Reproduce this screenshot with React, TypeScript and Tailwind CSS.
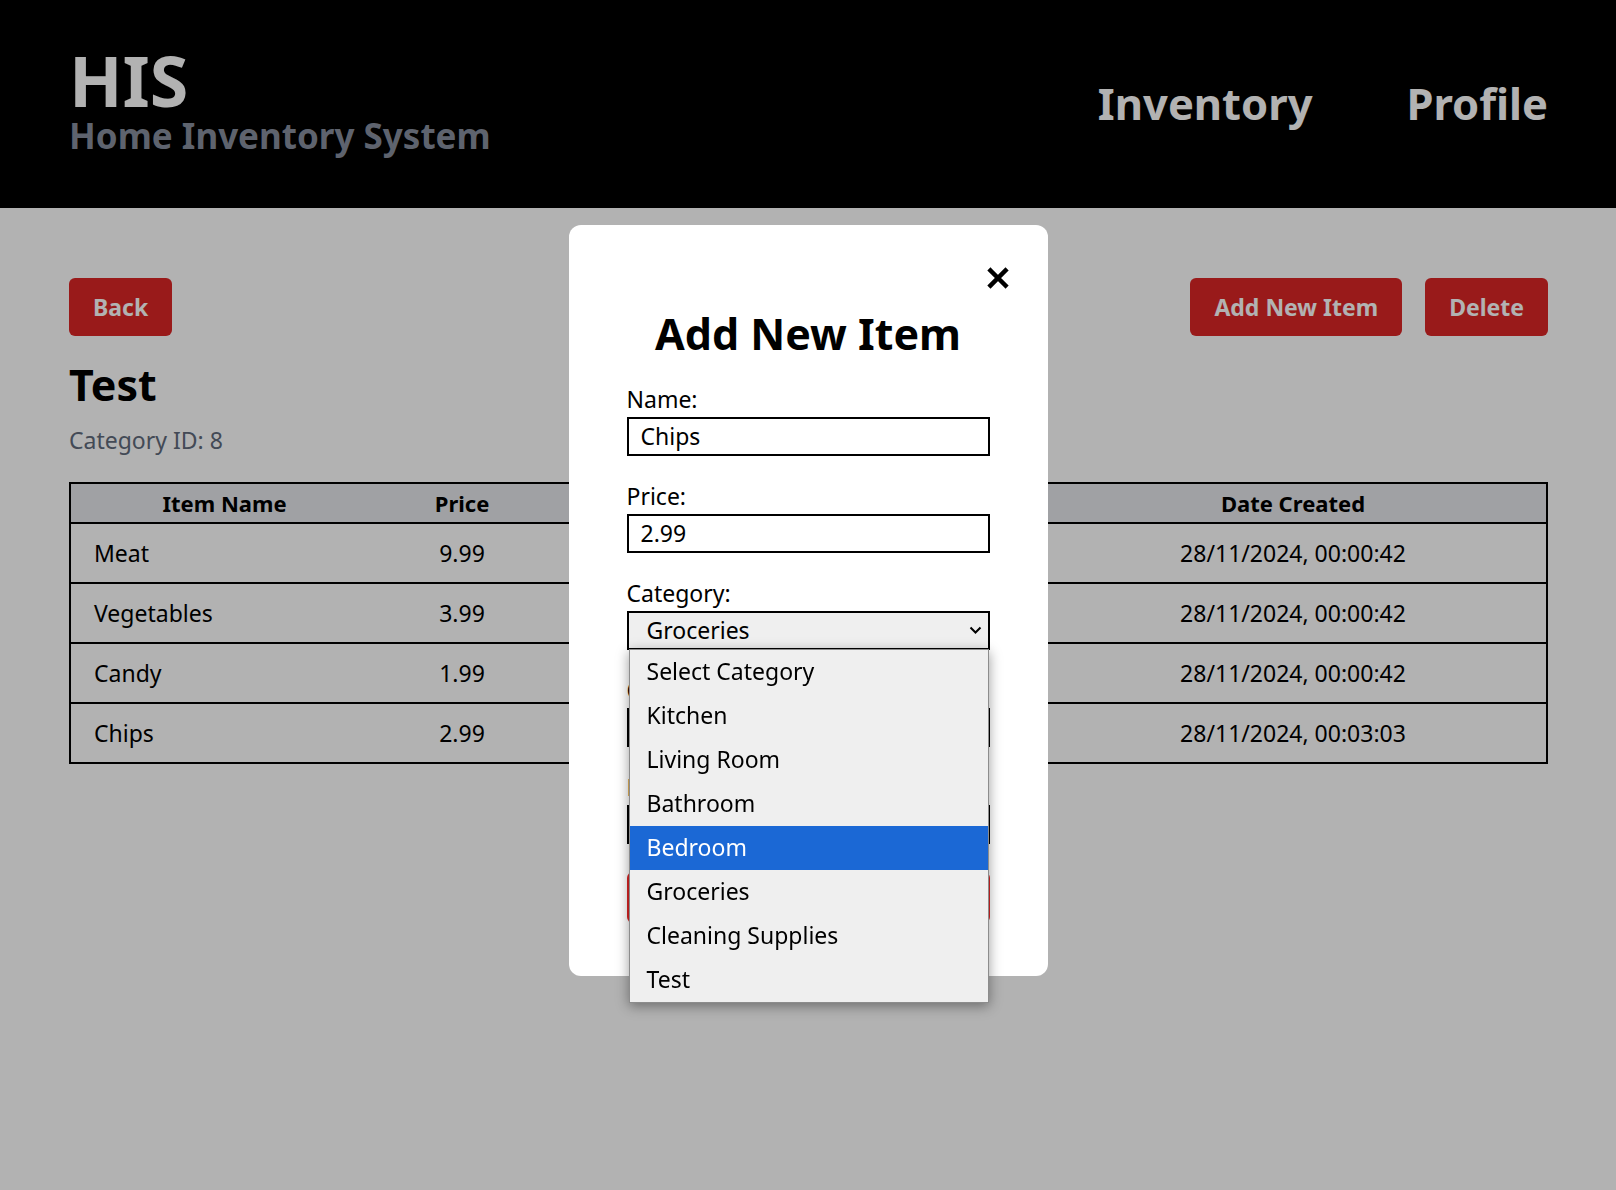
import React from 'react';

const items = [
  { name: 'Meat', price: '9.99', qty: '2', date: '28/11/2024, 00:00:42' },
  { name: 'Vegetables', price: '3.99', qty: '5', date: '28/11/2024, 00:00:42' },
  { name: 'Candy', price: '1.99', qty: '10', date: '28/11/2024, 00:00:42' },
  { name: 'Chips', price: '2.99', qty: '3', date: '28/11/2024, 00:03:03' },
];

const categories = [
  'Select Category',
  'Kitchen',
  'Living Room',
  'Bathroom',
  'Bedroom',
  'Groceries',
  'Cleaning Supplies',
  'Test',
];

function Field({ label, children }: { label: string; children: React.ReactNode }) {
  return (
    <div className="mb-[24px] flex flex-col gap-[2px]">
      <label className="text-[23px] leading-[32px] text-black">{label}</label>
      {children}
    </div>
  );
}

function TextInput({ value }: { value: string }) {
  return (
    <input
      readOnly
      value={value}
      className="h-[39px] w-full border-2 border-black bg-white px-[12px] text-[23px] text-black outline-none"
    />
  );
}

function CategorySelect() {
  return (
    <div className="relative">
      <button className="flex h-[39px] w-full items-center justify-between border-2 border-black bg-[#efefef] pl-[18px] pr-[6px] text-[23px] text-black">
        <span>Groceries</span>
        <svg width="13" height="8" viewBox="0 0 13 8" fill="none">
          <path d="M1.5 1.5L6.5 6.5L11.5 1.5" stroke="black" strokeWidth="2" />
        </svg>
      </button>
      <ul className="absolute left-[2px] top-[38px] z-10 w-[360px] border border-[#8c8c8c] bg-[#efefef] shadow-[0_3px_12px_rgba(0,0,0,0.4)]">
        {categories.map((c) => (
          <li
            key={c}
            className={`flex h-[44px] items-center pl-[17px] text-[23px] ${
              c === 'Bedroom' ? 'bg-[#1b68d5] text-white' : 'text-black'
            }`}
          >
            {c}
          </li>
        ))}
      </ul>
    </div>
  );
}

function AddItemModal() {
  return (
    <div className="fixed inset-0 flex items-center justify-center bg-black/30">
      <div className="relative mt-[10px] w-[479px] rounded-xl bg-white px-[58px] pb-[53px] pt-[83px]">
        <button className="absolute right-[39px] top-[42px]">
          <svg width="22" height="22" viewBox="0 0 22 22">
            <path d="M3.5 3.5L18.5 18.5M18.5 3.5L3.5 18.5" stroke="black" strokeWidth="4.5" strokeLinecap="square" />
          </svg>
        </button>
        <h2 className="mb-[23px] text-center text-[43px] font-bold leading-[52px] text-black">Add New Item</h2>
        <Field label="Name:">
          <TextInput value="Chips" />
        </Field>
        <Field label="Price:">
          <TextInput value="2.99" />
        </Field>
        <Field label="Category:">
          <CategorySelect />
        </Field>
        <Field label="Quantity:">
          <TextInput value="1" />
        </Field>
        <Field label="Description:">
          <TextInput value="" />
        </Field>
        <button className="mt-[4px] h-[51px] w-full rounded-md bg-[#dc2626] text-[23px] font-bold text-white">
          Add Item
        </button>
      </div>
    </div>
  );
}

export default function App() {
  return (
    <div className="min-h-screen bg-white font-['Noto_Sans',sans-serif]">
      <header className="flex h-[208px] items-center justify-between bg-black pl-[69px] pr-[68px]">
        <div className="flex flex-col">
          <h1 className="text-[70px] font-bold leading-[64px] text-white">HIS</h1>
          <p className="text-[35px] font-bold leading-[48px] text-[#878f9e]">Home Inventory System</p>
        </div>
        <nav className="flex items-center gap-[94px] text-[43.5px] font-bold leading-none text-white">
          <a>Inventory</a>
          <a>Profile</a>
        </nav>
      </header>

      <main className="pl-[69px] pr-[68px] pt-[70px]">
        <div className="flex items-start justify-between">
          <button className="h-[58px] rounded-md bg-[#dc2626] px-[24px] text-[23px] font-bold text-white">Back</button>
          <div className="flex gap-[23px]">
            <button className="h-[58px] rounded-md bg-[#dc2626] px-[24px] text-[23px] font-bold text-white">
              Add New Item
            </button>
            <button className="h-[58px] rounded-md bg-[#dc2626] px-[24px] text-[23px] font-bold text-white">
              Delete
            </button>
          </div>
        </div>

        <h2 className="mt-[23px] text-[43px] font-bold leading-[52px] text-black">Test</h2>
        <p className="mt-[13px] text-[23px] leading-[32px] text-[#606a7b]">Category ID: 8</p>

        <table className="mt-[26px] w-full table-fixed border-collapse border-2 border-black text-black">
          <thead>
            <tr className="h-[40px] border-b-2 border-black bg-[#e5e7eb] text-[22px]">
              <th className="w-[308px] font-bold">Item Name</th>
              <th className="w-[168px] font-bold">Price</th>
              <th className="w-[494px] font-bold">Quantity</th>
              <th className="font-bold">Date Created</th>
            </tr>
          </thead>
          <tbody>
            {items.map((it) => (
              <tr key={it.name} className="h-[60px] border-b-2 border-black text-[23px]">
                <td className="pl-[23px] text-left">{it.name}</td>
                <td className="text-center">{it.price}</td>
                <td className="text-center">{it.qty}</td>
                <td className="text-center">{it.date}</td>
              </tr>
            ))}
          </tbody>
        </table>
      </main>

      <AddItemModal />
    </div>
  );
}
